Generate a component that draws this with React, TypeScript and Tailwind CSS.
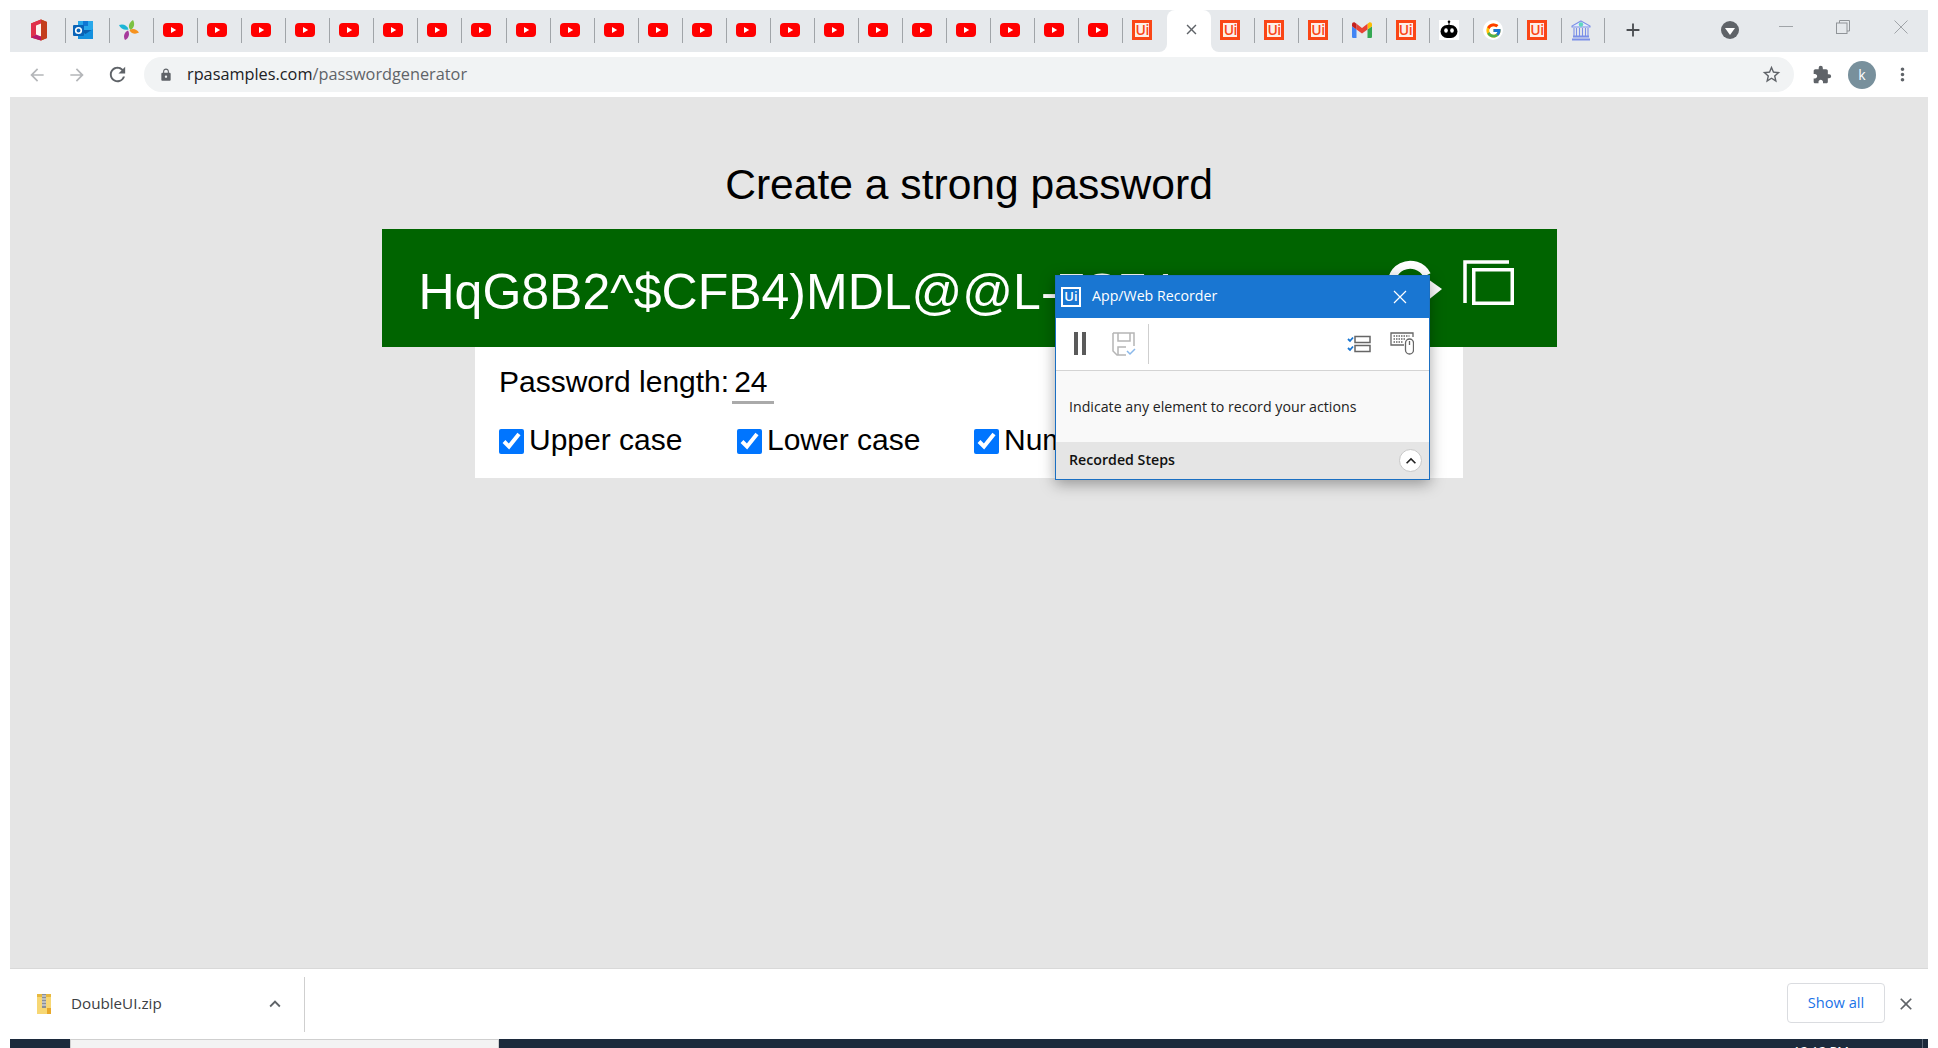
import React from "react";
import { MdArrowBack, MdArrowForward, MdRefresh, MdLock, MdStarBorder, MdExtension, MdMoreVert, MdClose, MdAdd, MdKeyboardArrowUp } from "react-icons/md";
import { FcGoogle } from "react-icons/fc";

const Yt = () => (
  <svg width="20" height="14" viewBox="0 0 20 14">
    <rect width="20" height="14" rx="4" fill="#ff0000" />
    <path d="M8 4l5.2 3L8 10z" fill="#fff" />
  </svg>
);

const UiBox = () => (
  <span className="flex h-5 w-5 items-center justify-center border-[3px] border-[#fa4616] bg-[#fdeee8] font-['Open_Sans',sans-serif] text-[14px] font-semibold leading-none tracking-[-0.5px] text-[#fa4616]">
    Ui
  </span>
);

const Office = () => (
  <svg className="-ml-[2px]" width="20" height="22" viewBox="0 0 20 22">
    <path d="M2 4.500 12 .5l6 2.500v16l-6 2.500-10-3z" fill="#d83b01" />
    <path d="M2 4.500 12 .5v4L7 6.500v9l-5 3z" fill="#e0304a" />
    <path d="M7 6.500l5-2v13l-8 .5 3-2.500z" fill="#fdf3ef" />
    <path d="M2 18.500l10 3v-4L7 15.500z" fill="#b4186c" />
    <path d="M12 .5l6 2.500v16l-6 2.500z" fill="#c43e1c" />
  </svg>
);

const Outlook = () => (
  <svg className="-ml-[2px]" width="20" height="20" viewBox="0 0 20 20">
    <rect x="5" y="1" width="15" height="10" fill="#28a8ea" />
    <rect x="10" y="1" width="5" height="5" fill="#0f78d4" />
    <path d="M5 10h15v9H5z" fill="#0a5fb0" />
    <path d="M5 9l7.500 5L20 9v10H5z" fill="#1490df" />
    <rect x="0" y="5" width="11" height="11" rx="1" fill="#0a64b8" />
    <circle cx="5.500" cy="10.500" r="2.800" fill="none" stroke="#fff" strokeWidth="1.600" />
  </svg>
);

const Star = () => (
  <svg width="20" height="20" viewBox="0 0 20 20">
    <path d="M0 5C4 3.500 8 5 9.500 9.500 5.500 10.500 1.500 9 0 5z" fill="#1cb5d6" />
    <path d="M14 0c2 3.500 1.500 7.500-2.500 10C8.500 7 10 2.500 14 0z" fill="#7cc142" />
    <path d="M20 12.500c-3.500 2-7 1.500-9.500-2C13.500 8 17.500 9 20 12.500z" fill="#f6921e" />
    <path d="M6 20C4 16.500 5 12.500 9 10.500c2 3.500 1 7.500-3 9.500z" fill="#a63a9c" />
  </svg>
);

const Gmail = () => (
  <svg width="20" height="16" viewBox="0 0 20 16">
    <path d="M1.300 16h3.200V7.500L0 4.200V14.700c0 .7.600 1.300 1.300 1.300z" fill="#4285f4" />
    <path d="M15.500 16h3.200c.7 0 1.300-.6 1.300-1.300V4.200l-4.500 3.300z" fill="#34a853" />
    <path d="M15.500 1.800v5.700L20 4.200V2.200C20 .6 18.200-.3 16.900.7z" fill="#fbbc04" />
    <path d="M4.500 7.500V1.800L10 5.900l5.500-4.100v5.700L10 11.600z" fill="#ea4335" />
    <path d="M0 2.200v2L4.500 7.500V1.800L3.100.7C1.800-.3 0 .6 0 2.200z" fill="#c5221f" />
  </svg>
);

const Bot = () => (
  <span className="flex h-5 w-5 items-center justify-center bg-white">
    <svg width="20" height="20" viewBox="0 0 20 20">
      <circle cx="10" cy="1.800" r="1.300" fill="#000" />
      <rect x="9.500" y="2.500" width="1" height="3" fill="#000" />
      <rect x="1.500" y="5" width="17" height="13" rx="6.500" fill="#000" />
      <ellipse cx="7" cy="10.500" rx="1.800" ry="2.200" fill="#fff" />
      <ellipse cx="13" cy="10.500" rx="1.800" ry="2.200" fill="#fff" />
    </svg>
  </span>
);

const Google = () => (
  <span className="flex h-5 w-5 items-center justify-center rounded-full bg-white">
    <FcGoogle size={17} />
  </span>
);

const Bank = () => (
  <svg width="20" height="21" viewBox="0 0 20 21" fill="none" stroke="#7b90e8" strokeWidth="1.100">
    <path d="M10 1 19 6v1H1V6z" fill="#e6ecfb" />
    <circle cx="10" cy="4.500" r="2.200" fill="#5fd6c0" stroke="none" />
    <path d="M3 8v8M5.500 8v8M8.500 8v8M11.500 8v8M14.500 8v8M17 8v8" />
    <path d="M2 16.500h16M1 19.500h18" strokeWidth="2" />
  </svg>
);

type Kind = "office" | "outlook" | "star" | "yt" | "ui" | "gmail" | "bot" | "google" | "bank" | "active";

const renderIcon = (k: Kind) => {
  switch (k) {
    case "office": return <Office />;
    case "outlook": return <Outlook />;
    case "star": return <Star />;
    case "yt": return <Yt />;
    case "ui": return <UiBox />;
    case "gmail": return <Gmail />;
    case "bot": return <Bot />;
    case "google": return <Google />;
    case "bank": return <Bank />;
    default: return null;
  }
};

const leftTabs: Kind[] = [
  "office", "outlook", "star",
  ...Array.from({ length: 22 }, () => "yt" as Kind),
  "ui",
];
const rightTabs: Kind[] = ["ui", "ui", "ui", "gmail", "ui", "bot", "google", "ui", "bank"];

const LeftTab = ({ kind, sep }: { kind: Kind; sep: boolean }) => (
  <div className="flex h-full w-[44.05px] shrink-0 items-center">
    <div className="flex w-[43.05px] items-center pb-[2px] pl-[9px]">{renderIcon(kind)}</div>
    {sep && <span className="mb-[1px] h-[25px] w-px bg-[#a0a4a8]" />}
  </div>
);

const RightTab = ({ kind }: { kind: Kind }) => (
  <div className="flex h-full w-[43.8px] shrink-0 items-center">
    <div className="flex w-[42.8px] items-center pb-[2px] pl-[9px]">{renderIcon(kind)}</div>
    <span className="mb-[1px] h-[25px] w-px bg-[#a0a4a8]" />
  </div>
);

const ActiveTab = () => (
  <div className="relative flex h-full w-[44.1px] shrink-0 items-center justify-center rounded-t-lg bg-white">
    <span className="absolute bottom-0 -left-2 h-2 w-2 bg-white">
      <span className="block h-2 w-2 rounded-br-lg bg-[#e6e9ec]" />
    </span>
    <span className="absolute bottom-0 -right-2 h-2 w-2 bg-white">
      <span className="block h-2 w-2 rounded-bl-lg bg-[#e6e9ec]" />
    </span>
    <MdClose size={17} className="ml-1 -mt-[3px] text-[#5f6368]" />
  </div>
);

const RecorderDialog = () => (
  <div className="absolute left-[1045px] top-[178px] z-10 flex h-[205px] w-[375px] flex-col border border-[#1b6fc2] bg-white font-['Open_Sans',sans-serif] shadow-[0_4px_14px_rgba(0,0,0,0.35)]">
    <div className="flex h-[42px] items-center bg-[#1976d2] pb-[1px] pl-[5px] pr-[22px] text-white">
      <span className="flex h-5 w-5 items-center justify-center border-2 border-white text-[13px] font-semibold leading-none">Ui</span>
      <span className="ml-[11px] mb-[1px] text-[14.2px]">App/Web Recorder</span>
      <svg className="ml-auto" width="14" height="14" viewBox="0 0 14 14" stroke="#fff" strokeWidth="1.200">
        <path d="M1 1l12 12M13 1 1 13" />
      </svg>
    </div>
    <div className="flex h-[53px] items-center border-b border-[#d4d4d4] pb-[1px] pl-[18px] pr-[15px]">
      <svg width="12" height="23" viewBox="0 0 12 23" fill="#5a5a5a">
        <rect width="4" height="23" />
        <rect x="8" width="4" height="23" />
      </svg>
      <svg className="ml-[26px]" width="24" height="24" viewBox="0 0 24 24" fill="none" stroke="#b5b5b5" strokeWidth="1.500">
        <path d="M1 1h21v13M1 1v18l4 4h9" />
        <path d="M6 1v8h12V1M6 23v-8h8" />
        <path d="M15 19l3 3 5-5" stroke="#8ab8ea" />
      </svg>
      <span className="ml-[12px] h-[40px] w-px bg-[#cfcfcf]" />
      <svg className="ml-auto" width="24" height="20" viewBox="0 0 24 20" fill="none" stroke="#666" strokeWidth="1.500">
        <rect x="8" y="2.500" width="15" height="6" />
        <rect x="8" y="11.500" width="15" height="6" />
        <path d="M1 5l2 2 3-3.500M1 14l2 2 3-3.500" stroke="#1976d2" strokeWidth="1.800" />
      </svg>
      <svg className="ml-[19px]" width="24" height="23" viewBox="0 0 24 23" fill="none" stroke="#666" strokeWidth="1.300">
        <path d="M14 13H1V1h22v4" />
        <path d="M3.500 4h16M3.500 7h12M3.500 10h9" strokeDasharray="1.500 1" />
        <rect x="15.500" y="7" width="8" height="15" rx="4" />
        <path d="M19.500 9v4" />
      </svg>
    </div>
    <div className="flex h-[71px] items-center bg-[#f9f9f9] pl-[13px] text-[14.2px] text-[#222]">
      Indicate any element to record your actions
    </div>
    <div className="flex flex-1 items-center bg-[#e5e5e5] pl-[13px] pr-[7px] text-[14.2px] font-semibold text-[#111]">
      <span className="mb-[2px]">Recorded Steps</span>
      <span className="ml-auto flex h-[23px] w-[23px] items-center justify-center rounded-full border border-[#c8c8c8] bg-white">
        <MdKeyboardArrowUp size={20} className="text-[#222]" />
      </span>
    </div>
  </div>
);

export default function App() {
  return (
    <div className="flex h-[1048px] flex-col overflow-hidden bg-white px-[10px] pt-[10px] font-['Liberation_Sans',sans-serif]">
      {/* tab strip */}
      <div className="flex h-[42px] shrink-0 items-center bg-[#e6e9ec] pl-[12px]">
        {leftTabs.map((k, i) => (
          <LeftTab key={i} kind={k} sep={i < leftTabs.length - 1} />
        ))}
        <ActiveTab />
        {rightTabs.map((k, i) => (
          <RightTab key={i} kind={k} />
        ))}
        <MdAdd size={22} className="ml-[17px] mb-[2px] text-[#4a4d51]" />
        <span className="ml-[77px] mb-[2px] flex h-[18px] w-[18px] items-center justify-center rounded-full bg-[#5f6368]">
          <span className="mt-[3px] h-0 w-0 border-x-[5px] border-t-[7px] border-x-transparent border-t-white" />
        </span>
        <svg className="ml-[40px] mb-[8px]" width="14" height="2" viewBox="0 0 14 2"><rect width="14" height="1" fill="#a0a4a8" /></svg>
        <svg className="ml-[43px] mb-[8px]" width="14" height="14" viewBox="0 0 14 14" fill="none" stroke="#909498">
          <path d="M3.500 3V.5h10V11H11" />
          <rect x=".5" y="3" width="10.500" height="10.500" />
        </svg>
        <svg className="ml-[44px] mb-[8px]" width="14" height="14" viewBox="0 0 14 14" stroke="#a0a4a8">
          <path d="M.5.5l13 13M13.500.5l-13 13" />
        </svg>
      </div>

      {/* toolbar */}
      <div className="flex h-[45px] shrink-0 items-center pl-[17px] pr-[15px]">
        <MdArrowBack size={20} className="text-[#b4b6b9]" />
        <MdArrowForward size={20} className="ml-[20px] text-[#b4b6b9]" />
        <MdRefresh size={23} className="ml-[19px] text-[#5f6368]" />
        <div className="ml-[15px] flex h-[35px] flex-1 items-center rounded-full bg-[#f1f3f4] pl-[15px] pr-[12px] font-['Open_Sans',sans-serif] text-[16.3px]">
          <MdLock size={14} className="text-[#5f6368]" />
          <span className="ml-[14px] text-[#202124]">rpasamples.com</span>
          <span className="text-[#5f6368]">/passwordgenerator</span>
          <MdStarBorder size={21} className="ml-auto text-[#5f6368]" />
        </div>
        <MdExtension size={20} className="ml-[18px] text-[#5f6368]" />
        <span className="ml-[16px] flex h-7 w-7 items-center justify-center rounded-full bg-[#78909c] font-['Open_Sans',sans-serif] text-[14px] text-white">k</span>
        <MdMoreVert size={21} className="ml-[16px] text-[#5f6368]" />
      </div>

      {/* page */}
      <div className="relative flex min-h-0 flex-1 flex-col items-center bg-[#e5e5e5]">
        <h1 className="mt-[60px] h-[72px] text-[42.6px] font-normal leading-[54px] text-black">Create a strong password</h1>
        <div className="flex h-[118px] w-[1175px] shrink-0 bg-[#006400] pl-[37px] text-white">
          <span className="mt-[33px] text-[50px] leading-[60px]">HqG8B2^$CFB4)MDL@@L-7S74</span>
          <svg className="ml-auto mt-[30px]" width="58" height="50" viewBox="0 0 58 50" fill="none" stroke="#fff" strokeWidth="8">
            <path d="M6.500 33A18 18 0 0 1 40 16" />
            <path d="M38 18 55 30 40 42z" fill="#fff" stroke="none" />
          </svg>
          <svg className="ml-[18px] mr-[42px] mt-[31px]" width="52" height="46" viewBox="0 0 52 46" fill="none" stroke="#fff" strokeWidth="3.500">
            <path d="M46 2H2v41" />
            <rect x="10.750" y="9.750" width="38.500" height="33.500" />
          </svg>
        </div>
        <div className="flex h-[131px] w-[988px] shrink-0 flex-col bg-white pl-[24px] text-[30px] leading-none text-black">
          <div className="mt-[20px] flex h-[37px] items-start">
            <span className="leading-[29px]">Password length:</span>
            <span className="ml-[3px] h-[37px] w-[42px] border-b-[3px] border-[#aaaaaa] pl-[2px] leading-[29px]">24</span>
          </div>
          <div className="mt-[21px] flex items-center">
            <label className="flex w-[238px] items-center">
              <input type="checkbox" defaultChecked className="m-0 h-[25px] w-[25px]" />
              <span className="ml-[5px] mb-[2px]">Upper case</span>
            </label>
            <label className="flex w-[237px] items-center">
              <input type="checkbox" defaultChecked className="m-0 h-[25px] w-[25px]" />
              <span className="ml-[5px] mb-[2px]">Lower case</span>
            </label>
            <label className="flex items-center">
              <input type="checkbox" defaultChecked className="m-0 h-[25px] w-[25px]" />
              <span className="ml-[5px] mb-[2px]">Numbers</span>
            </label>
          </div>
        </div>
        <RecorderDialog />
      </div>

      {/* download bar */}
      <div className="flex h-[71px] shrink-0 items-center border-t border-[#d9d9d9] pl-[27px] pr-[12px] font-['Open_Sans',sans-serif]">
        <svg width="14" height="20" viewBox="0 0 14 20">
          <path d="M0 0h14v20H0z" fill="#f7d774" />
          <path d="M0 0h14v3H0z" fill="#e8b93f" />
          <rect x="5" y="0" width="4" height="14" fill="#8a8f96" />
          <path d="M5 2h4M5 5h4M5 8h4M5 11h4" stroke="#eee" />
          <rect x="10" y="14" width="4" height="6" fill="#e8a82a" />
        </svg>
        <span className="ml-[20px] mb-[1px] text-[15.2px] text-[#3c4043]">DoubleUI.zip</span>
        <MdKeyboardArrowUp size={22} className="ml-[102px] text-[#5f6368]" />
        <span className="ml-[18px] h-[55px] w-px bg-[#cfcfcf]" />
        <button className="ml-auto mb-[2px] h-[40px] w-[98px] rounded border border-[#dadce0] text-[14.6px] text-[#1a73e8]">Show all</button>
        <MdClose size={20} className="ml-[11px] mb-[1px] text-[#5f6368]" />
      </div>

      {/* taskbar sliver */}
      <div className="flex h-[9px] shrink-0 overflow-hidden bg-[#1c2a3c]">
        <div className="w-[60px] shrink-0" />
        <div className="w-[429px] shrink-0 border-x border-t border-[#cfcfcf] bg-[#f3f3f3]" />
        <div className="flex-1 pl-[1294px] pt-[6px] font-['Open_Sans',sans-serif] text-[13px] leading-none text-white">12:12 PM</div>
        <div className="ml-auto w-[6px] shrink-0 border-l border-[#5a6675]" />
      </div>
    </div>
  );
}
